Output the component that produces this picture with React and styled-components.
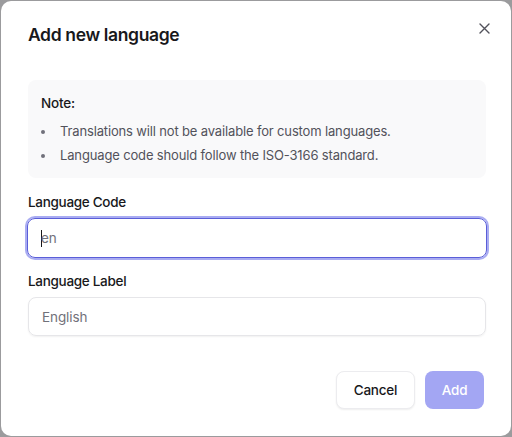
import React from "react";
import styled, { createGlobalStyle } from "styled-components";

const Global = createGlobalStyle`
  html, body {
    margin: 0;
    padding: 0;
    background: #9b9b9d;
  }
  * { box-sizing: border-box; }
`;

const Dialog = styled.div`
  position: relative;
  margin: 1px;
  width: 510px;
  height: 435px;
  background: #fff;
  border-radius: 10px;
  padding: 20px 26px 27px;
  font-family: Inter, "Noto Sans", sans-serif;
  color: #18181b;
  display: flex;
  flex-direction: column;
`;

const Title = styled.h2`
  margin: 0;
  font-size: 17.5px;
  line-height: 28px;
  font-weight: 600;
  letter-spacing: -0.35px;
  padding-left: 1px;
`;

const Close = styled.button`
  position: absolute;
  top: 20px;
  right: 20px;
  width: 14px;
  height: 14px;
  padding: 0;
  border: none;
  background: none;
  display: flex;
  align-items: center;
  justify-content: center;
  color: #52525b;
`;

const Note = styled.div`
  margin: 31px 0 0 1px;
  width: 458px;
  background: #f9f9fa;
  border-radius: 8px;
  padding: 13px 13px;
`;

const NoteTitle = styled.div`
  font-size: 13.5px;
  line-height: 20px;
  font-weight: 500;
  letter-spacing: -0.2px;
`;

const List = styled.ul`
  margin: 8px 0 0;
  padding: 0 0 0 15px;
  display: flex;
  flex-direction: column;
  gap: 4px;
  color: #52525b;
  font-size: 13px;
  line-height: 20px;
  letter-spacing: -0.15px;
  li { padding-left: 4px; }
  li::marker { color: #71717a; }
`;

const Label = styled.div`
  margin-top: ${(p) => p.$top}px;
  font-size: 13.5px;
  line-height: 20px;
  font-weight: 500;
  letter-spacing: -0.3px;
  padding-left: 1px;
`;

const Field = styled.div`
  margin-top: 6px;
  height: ${(p) => (p.$focused ? 40 : 39)}px;
  width: ${(p) => (p.$focused ? 460 : 458)}px;
  margin-left: ${(p) => (p.$focused ? 0 : 1)}px;
  border-radius: 8px;
  border: ${(p) => (p.$focused ? "1.5px solid #5a5ed8" : "1px solid #e6e6e9")};
  box-shadow: ${(p) =>
    p.$focused
      ? "0 0 0 2px rgba(140, 144, 238, 0.75)"
      : "0 1px 2px rgba(0, 0, 0, 0.06)"};
  display: flex;
  align-items: center;
  padding-left: 13px;
  font-size: 13.5px;
  letter-spacing: -0.1px;
  color: #71717a;
`;

const Caret = styled.span`
  display: inline-block;
  width: 1px;
  height: 17px;
  background: #18181b;
  margin-right: -1px;
`;

const Actions = styled.div`
  margin-top: auto;
  display: flex;
  justify-content: flex-end;
  gap: 10px;
  padding-right: 1px;
`;

const Button = styled.button`
  height: 38px;
  width: ${(p) => (p.$primary ? 59 : 79)}px;
  padding: 0;
  border-radius: 8px;
  font-family: inherit;
  font-size: 13.5px;
  letter-spacing: -0.2px;
  font-weight: 500;
  border: ${(p) => (p.$primary ? "none" : "1px solid #ececef")};
  background: ${(p) => (p.$primary ? "#a3a6f3" : "#fff")};
  color: ${(p) => (p.$primary ? "#fff" : "#18181b")};
  box-shadow: ${(p) => (p.$primary ? "none" : "0 1px 2px rgba(0,0,0,0.07)")};
`;

export default function App() {
  return (
    <>
      <Global />
      <Dialog>
        <Title>Add new language</Title>
        <Close aria-label="Close">
          <svg width="11" height="11" viewBox="0 0 11 11" fill="none">
            <path d="M1 1L10 10M10 1L1 10" stroke="currentColor" strokeWidth="1.4" strokeLinecap="round" />
          </svg>
        </Close>
        <Note>
          <NoteTitle>Note:</NoteTitle>
          <List>
            <li>Translations will not be available for custom languages.</li>
            <li>Language code should follow the ISO-3166 standard.</li>
          </List>
        </Note>
        <Label $top={14}>Language Code</Label>
        <Field $focused>
          <Caret />
          en
        </Field>
        <Label $top={13}>Language Label</Label>
        <Field>English</Field>
        <Actions>
          <Button>Cancel</Button>
          <Button $primary>Add</Button>
        </Actions>
      </Dialog>
    </>
  );
}
